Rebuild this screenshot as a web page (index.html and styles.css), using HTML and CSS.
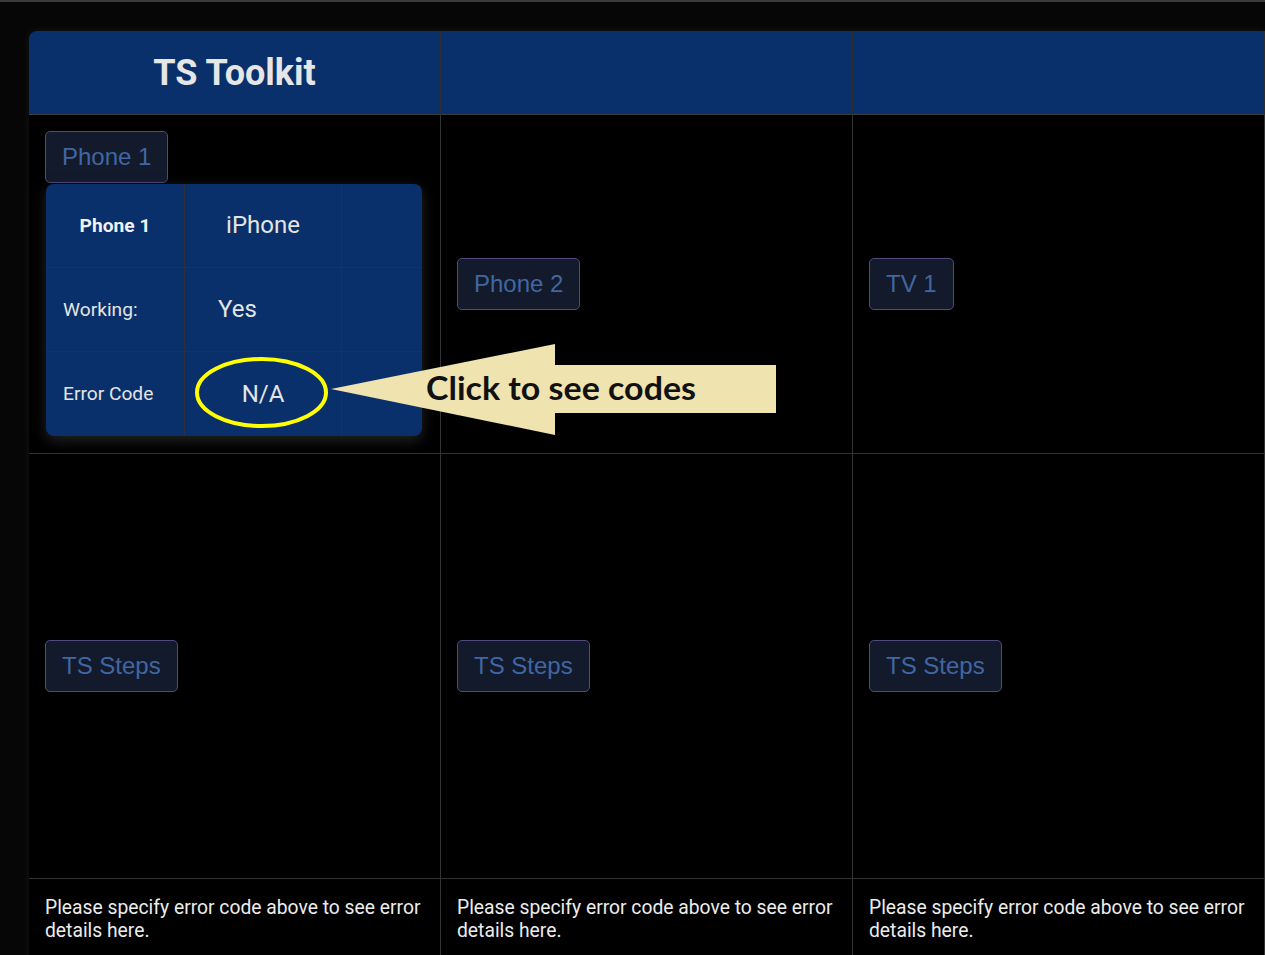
FILE: index.html
```html
<!DOCTYPE html>
<html lang="en">
<head>
<meta charset="utf-8">
<title>TS Toolkit</title>
<link rel="stylesheet" href="styles.css">
</head>
<body>
<div class="page">
  <div class="table">
    <div class="cell head first"><h1 class="title">TS Toolkit</h1></div>
    <div class="cell head"></div>
    <div class="cell head last"></div>

    <div class="cell devices col-first">
      <button class="btn">Phone 1</button>
      <div class="card">
        <div class="c label bold">Phone 1</div>
        <div class="c value center">iPhone</div>
        <div class="c end"></div>
        <div class="c label">Working:</div>
        <div class="c value yes">Yes</div>
        <div class="c end"></div>
        <div class="c label last-row">Error Code</div>
        <div class="c value center last-row">N/A</div>
        <div class="c end last-row"></div>
      </div>
    </div>
    <div class="cell devices"><button class="btn">Phone 2</button></div>
    <div class="cell devices"><button class="btn">TV 1</button></div>

    <div class="cell steps"><button class="btn">TS Steps</button></div>
    <div class="cell steps"><button class="btn">TS Steps</button></div>
    <div class="cell steps"><button class="btn">TS Steps</button></div>

    <div class="cell details"><p class="msg">Please specify error code above to see error details here.</p></div>
    <div class="cell details"><p class="msg">Please specify error code above to see error details here.</p></div>
    <div class="cell details"><p class="msg">Please specify error code above to see error details here.</p></div>
  </div>
</div>

<svg class="annot" width="1265" height="955" viewBox="0 0 1265 955">
  <ellipse cx="261.5" cy="392.5" rx="64.5" ry="33.5" fill="none" stroke="#ffff00" stroke-width="4"/>
  <polygon points="331,389 555,344 555,365 776,365 776,413 555,413 555,435" fill="#efe3b0"/>
  <text class="callout" x="426" y="400" textLength="270" lengthAdjust="spacingAndGlyphs">Click to see codes</text>
</svg>
</body>
</html>
```

FILE: styles.css
```css
html {
  background: #060606;
}
body {
  margin: 0;
  border-top: 2px solid #3b3b3b;
  background: #060606;
  font-family: Roboto, "Liberation Sans", Arial, sans-serif;
  overflow: hidden;
  height: 953px;
}
.page {
  padding: 29px 0 0 29px;
}
.table {
  display: grid;
  grid-template-columns: repeat(3, 412px);
  grid-template-rows: 84px 339px 425px 1fr;
  height: 940px;
  background: #000;
  border-radius: 8px 0 0 0;
  box-shadow: 0 0 9px rgba(255, 255, 255, 0.07);
}
.cell {
  border-right: 1px solid #333;
  border-bottom: 1px solid #333;
  box-sizing: border-box;
}
.head {
  background: #0a306b;
  border-right-color: #2e2e2e;
  border-bottom-color: #3c3c3c;
  display: flex;
  align-items: center;
  justify-content: center;
}
.head.first {
  border-top-left-radius: 8px;
}
.title {
  margin: 0;
  font-family: Roboto, sans-serif;
  font-weight: 700;
  font-size: 36px;
  color: #e6e6e6;
}
.devices,
.steps {
  display: flex;
  flex-direction: column;
  justify-content: center;
  align-items: flex-start;
  padding: 0 16px;
}
.col-first {
  gap: 1px;
  padding-bottom: 2px;
}
.btn {
  font-family: "Liberation Sans", Arial, sans-serif;
  font-size: 24px;
  line-height: 28px;
  color: #4067a3;
  background: #131a2c;
  border: 1px solid #514a7d;
  border-radius: 5px;
  padding: 11px 16px;
  cursor: pointer;
}
.card {
  margin-left: 1px;
  width: 376px;
  display: grid;
  grid-template-columns: 139px 157px 80px;
  grid-template-rows: 84px 84px 84px;
  background: #0a306b;
  border-radius: 8px;
  overflow: hidden;
  box-shadow: 0 4px 14px rgba(40, 40, 40, 0.9);
}
.c {
  box-sizing: border-box;
  border-right: 1px solid #2f2f35;
  border-bottom: 1px solid #2f2f35;
  display: flex;
  align-items: center;
  color: #e4e4e4;
}
.c.end {
  border-right: none;
}
.c.last-row {
  border-bottom: none;
}
.label {
  padding-left: 17px;
  font-size: 19.2px;
}
.label.bold {
  font-weight: 700;
  justify-content: center;
  padding-left: 0;
  color: #f2f2f2;
}
.value {
  font-size: 24px;
}
.value.center {
  justify-content: center;
}
.value.yes {
  padding-left: 33px;
}
.details {
  padding: 17px 16px 0 16px;
  border-bottom: none;
}
.msg {
  margin: 0;
  font-size: 19.3px;
  line-height: 23px;
  color: #ececec;
}
.annot {
  position: absolute;
  left: 0;
  top: 0;
  pointer-events: none;
}
.callout {
  font-family: Lato, "Open Sans", sans-serif;
  font-weight: 700;
  font-size: 33px;
  fill: #111;
}
```
